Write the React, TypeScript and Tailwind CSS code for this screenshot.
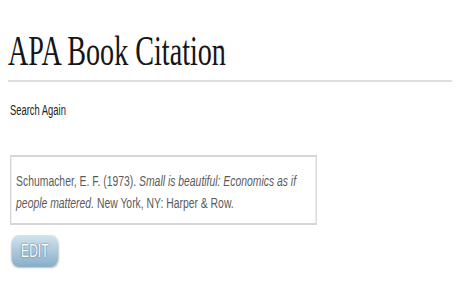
import React from "react";

export default function App() {
  return (
    <div className="w-[458px] h-[286px] overflow-hidden bg-white">
      <div className="w-[683px] origin-top-left scale-x-[0.67] pt-[30px] pl-[12px] pr-[8px] flex flex-col items-start font-['Liberation_Sans',Arial,sans-serif]">
        <h1 className="text-[42px] leading-none text-[#161616] whitespace-nowrap font-['Liberation_Serif','Times_New_Roman',serif]">
          APA Book Citation
        </h1>
        <div className="mt-[8px] h-[2px] w-full bg-[#dedede]" />
        <div className="mt-[18px] ml-[3px] text-[14px] leading-[20px] text-[#222]">
          Search Again
        </div>
        <div className="mt-[35px] ml-[3px] w-[458px] h-[70px] border-2 border-[#d6d6d6] pt-[13px] pl-[7px] text-[15.5px] leading-[22px] text-[#5a5a5a] whitespace-nowrap">
          Schumacher, E. F. (1973). <i>Small is beautiful: Economics as if</i>
          <br />
          <i>people mattered.</i> New York, NY: Harper &amp; Row.
        </div>
        <button className="mt-[10px] ml-[5px] w-[70px] h-[32px] rounded-[10px] bg-gradient-to-b from-[#d3e3ef] to-[#88aec8] shadow-[0_1px_2px_rgba(0,0,0,0.25)] text-white text-[18px] leading-none [text-shadow:0_0_2px_rgba(50,75,95,1)]">
          EDIT
        </button>
      </div>
    </div>
  );
}
